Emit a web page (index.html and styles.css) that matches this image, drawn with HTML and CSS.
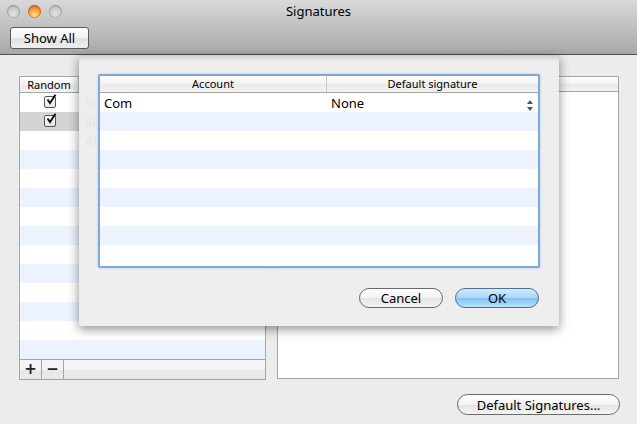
FILE: index.html
```html
<!DOCTYPE html>
<html>
<head>
<meta charset="utf-8">
<link rel="stylesheet" href="styles.css">
</head>
<body>
<div class="window">
  <div class="titlebar">
    <div class="lights">
      <span class="light gray"></span>
      <span class="light orange"></span>
      <span class="light gray"></span>
    </div>
    <div class="title">Signatures</div>
    <div class="toolbar"><button class="btn-square">Show All</button></div>
  </div>
  <div class="content">
    <div class="panes">
      <div class="leftpane">
        <div class="ltable">
          <div class="lhead">
            <div class="hcell c-random">Random</div>
            <div class="hcell c-name"></div>
          </div>
          <div class="lrows">
            <div class="lrow"><div class="c-random"><span class="check"><svg width="12" height="12" viewBox="0 0 12 12"><path d="M2.5 5.5 L5 9 L10.5 0.8" fill="none" stroke="#111" stroke-width="2"/></svg></span></div><div class="c-name">Sig</div></div>
            <div class="lrow sel"><div class="c-random"><span class="check"><svg width="12" height="12" viewBox="0 0 12 12"><path d="M2.5 5.5 L5 9 L10.5 0.8" fill="none" stroke="#111" stroke-width="2"/></svg></span></div><div class="c-name">Sig</div></div>
            <div class="lrow"><div class="c-random"></div><div class="c-name">All</div></div>
            <div class="lrow"></div><div class="lrow"></div><div class="lrow"></div><div class="lrow"></div>
            <div class="lrow"></div><div class="lrow"></div><div class="lrow"></div><div class="lrow"></div>
            <div class="lrow"></div><div class="lrow"></div><div class="lrow"></div>
          </div>
          <div class="lbar">
            <span class="pm">+</span><span class="pm">−</span><span class="lbar-fill"></span>
          </div>
        </div>
      </div>
      <div class="rightpane">
        <div class="rhead"></div>
      </div>
    </div>
    <div class="footer"><button class="btn-pill">Default Signatures...</button></div>
  </div>

  <div class="sheet">
    <div class="ring">
      <div class="stable">
        <div class="shead">
          <div class="sh c-acc">Account</div>
          <div class="sh c-sig">Default signature</div>
        </div>
        <div class="srow"><div class="c-acc">Com</div><div class="c-sig">None<span class="stepper"><svg width="6" height="11" viewBox="0 0 6 11"><path d="M3 0 L6 4 L0 4 Z M0 7 L6 7 L3 11 Z" fill="#555"/></svg></span></div></div>
        <div class="srow"></div><div class="srow"></div><div class="srow"></div><div class="srow"></div>
        <div class="srow"></div><div class="srow"></div><div class="srow"></div><div class="srow"></div>
      </div>
    </div>
    <div class="sbuttons">
      <button class="btn-pill w84">Cancel</button>
      <button class="btn-pill w84 blue">OK</button>
    </div>
  </div>
</div>
</body>
</html>
```

FILE: styles.css
```css
* { box-sizing: border-box; }
html, body { margin: 0; padding: 0; }
body {
  width: 637px; height: 424px; overflow: hidden;
  background: #ececec;
  font-family: "Lucida Grande", "Noto Sans", "DejaVu Sans", sans-serif;
  font-size: 13px; color: #000;
}
.window { position: relative; width: 637px; height: 424px; }

.titlebar {
  height: 55px;
  background: linear-gradient(#d9d9d9, #a8a8a8);
  border-bottom: 1px solid #505050;
  position: relative;
}
.lights { position: absolute; left: 7px; top: 5px; display: flex; gap: 8px; }
.light { width: 13px; height: 13px; border-radius: 50%; display: block; }
.light.gray {
  background: radial-gradient(circle at 50% 70%, #e4e4e4 0%, #c6c6c6 60%, #9e9e9e 100%);
  box-shadow: inset 0 0 0 1px rgba(0,0,0,0.18);
}
.light.orange {
  background: radial-gradient(circle at 50% 75%, #ffe08a 0%, #f7a53a 45%, #d9651b 85%, #b8531a 100%);
  box-shadow: inset 0 0 0 1px rgba(120,50,0,0.35);
}
.title { text-align: center; padding-top: 2px; line-height: 18px; font-size: 13px; }
.toolbar { padding: 7px 0 0 10px; }
.btn-square {
  font: inherit; font-size: 13px;
  width: 79px; height: 22px; padding: 0;
  border: 1px solid #5a5a5a; border-radius: 3px;
  background: linear-gradient(#ffffff, #f1f1f1 50%, #e2e2e2 51%, #eeeeee);
  color: #000;
}

.content { padding: 21px 0 0 19px; }
.panes { display: flex; gap: 11px; height: 303px; }
.ltable { width: 247px; height: 304px; border: 1px solid #a5a5a5; background: #fff; display: flex; flex-direction: column; }
.lhead { height: 16px; display: flex; border-bottom: 1px solid #a5a5a5; background: linear-gradient(#ffffff, #f2f2f2 50%, #e9e9e9 51%, #f3f3f3); font-size: 11px; }
.hcell { line-height: 15px; text-align: center; }
.lhead .c-random { width: 59px; border-right: 1px solid #c8c8c8; }
.lrows { flex: 1; }
.lrow { height: 19px; display: flex; align-items: center; }
.lrow:nth-child(even) { background: #edf3fe; }
.lrow.sel { background: #d4d4d4; }
.c-random { width: 59px; display: flex; justify-content: center; }
.c-name { flex: 1; padding-left: 6px; font-size: 13px; }
.check {
  width: 12px; height: 12px; border: 1px solid #555; border-radius: 2px;
  background: linear-gradient(#fff, #e5e5e5); display: block; position: relative; margin-top: -1px;
}
.check svg { position: absolute; left: 0; top: -3px; overflow: visible; }
.lbar { height: 20px; display: flex; border-top: 1px solid #a5a5a5; background: linear-gradient(#f4f4f4 50%, #e8e8e8 51%); }
.pm { width: 22px; border-right: 1px solid #a5a5a5; text-align: center; font-weight: bold; font-size: 15px; line-height: 18px; color: #222; font-family: "DejaVu Sans", sans-serif; }
.lbar-fill { flex: 1; }

.rightpane { width: 342px; height: 303px; border: 1px solid #a5a5a5; background: #fff; }
.rhead { height: 15px; border-bottom: 1px solid #a5a5a5; background: linear-gradient(#ffffff, #f2f2f2 50%, #e9e9e9 51%, #f3f3f3); }

.footer { display: flex; justify-content: flex-end; padding: 15px 17px 0 0; }
.btn-pill {
  font: inherit; font-size: 13px; color: #000;
  height: 21px; padding: 0; border-radius: 11px;
  border: 1px solid #6a6a6a;
  background: linear-gradient(#ffffff, #f3f3f3 50%, #e3e3e3 51%, #f4f4f4);
}
.footer .btn-pill { width: 163px; }

.sheet {
  position: absolute; left: 79px; top: 55px; width: 480px; height: 271px;
  background: rgba(237,237,237,0.96);
  box-shadow: 0 3px 10px rgba(0,0,0,0.45), inset 0 6px 6px -5px rgba(0,0,0,0.25);
  padding: 19px 20px 0 19px;
}
.ring {
  width: 442px; height: 194px;
  border: 2px solid #7fa9d8; border-radius: 2px;
  box-shadow: 0 0 2px #9cc1ea;
  background: #fff;
  overflow: hidden;
}
.stable { height: 100%; }
.shead { height: 17px; display: flex; border-bottom: 1px solid #a5a5a5; background: linear-gradient(#ffffff, #f2f2f2 50%, #e9e9e9 51%, #f3f3f3); font-size: 11px; }
.sh { line-height: 16px; text-align: center; }
.c-acc { width: 227px; padding-left: 4px; }
.sh.c-acc { border-right: 1px solid #c8c8c8; padding-left: 0; }
.c-sig { flex: 1; padding-left: 4px; display: flex; justify-content: space-between; align-items: center; }
.sh.c-sig { justify-content: center; padding-left: 0; }
.srow { height: 19px; display: flex; align-items: center; font-size: 13px; }
.srow:nth-child(odd) { background: #edf3fe; }
.stepper { display: block; margin-right: 5px; height: 11px; }
.sbuttons { display: flex; justify-content: flex-end; gap: 12px; padding: 20px 0 0 0; }
.w84 { width: 84px; height: 20px; }
.btn-pill.blue {
  border-color: #4b6f9c;
  background: linear-gradient(#d3ebfc, #a9d5f7 50%, #80c0f1 51%, #b9e2fb);
}
```
